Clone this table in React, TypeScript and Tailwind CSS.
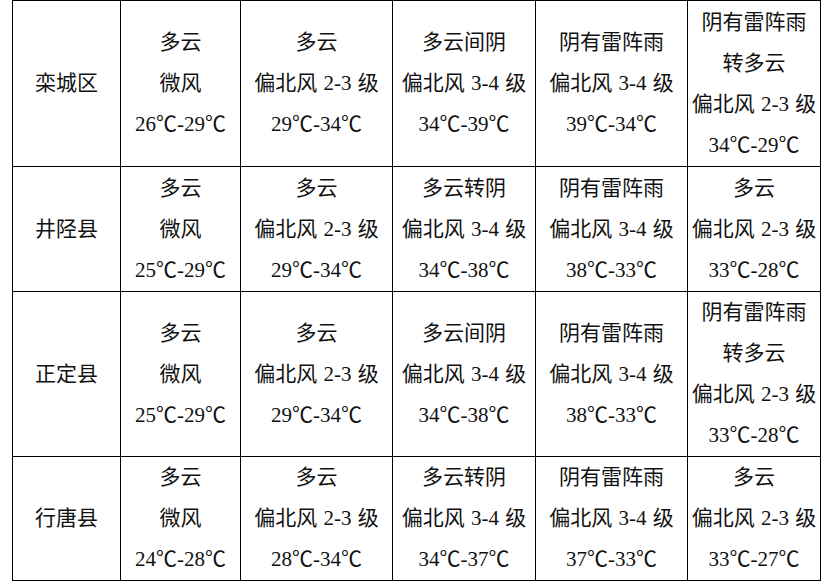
import React from 'react';

type Row = { name: string; cells: string[][] };

const rows: Row[] = [
  {
    name: '栾城区',
    cells: [
      ['多云', '微风', '26℃-29℃'],
      ['多云', '偏北风 2-3 级', '29℃-34℃'],
      ['多云间阴', '偏北风 3-4 级', '34℃-39℃'],
      ['阴有雷阵雨', '偏北风 3-4 级', '39℃-34℃'],
      ['阴有雷阵雨', '转多云', '偏北风 2-3 级', '34℃-29℃'],
    ],
  },
  {
    name: '井陉县',
    cells: [
      ['多云', '微风', '25℃-29℃'],
      ['多云', '偏北风 2-3 级', '29℃-34℃'],
      ['多云转阴', '偏北风 3-4 级', '34℃-38℃'],
      ['阴有雷阵雨', '偏北风 3-4 级', '38℃-33℃'],
      ['多云', '偏北风 2-3 级', '33℃-28℃'],
    ],
  },
  {
    name: '正定县',
    cells: [
      ['多云', '微风', '25℃-29℃'],
      ['多云', '偏北风 2-3 级', '29℃-34℃'],
      ['多云间阴', '偏北风 3-4 级', '34℃-38℃'],
      ['阴有雷阵雨', '偏北风 3-4 级', '38℃-33℃'],
      ['阴有雷阵雨', '转多云', '偏北风 2-3 级', '33℃-28℃'],
    ],
  },
  {
    name: '行唐县',
    cells: [
      ['多云', '微风', '24℃-28℃'],
      ['多云', '偏北风 2-3 级', '28℃-34℃'],
      ['多云转阴', '偏北风 3-4 级', '34℃-37℃'],
      ['阴有雷阵雨', '偏北风 3-4 级', '37℃-33℃'],
      ['多云', '偏北风 2-3 级', '33℃-27℃'],
    ],
  },
];

const rowHeights = ['h-[166px]', 'h-[125px]', 'h-[165px]', 'h-[124px]'];

// ℃ looks full-width in the original, so draw it with the CJK face
function Line({ text }: { text: string }) {
  const parts = text.split('℃');
  return (
    <div className="h-[41px]">
      {parts.map((p, k) => (
        <React.Fragment key={k}>
          {p}
          {k < parts.length - 1 && (
            <span className="leading-none" style={{ fontFamily: '"Noto Sans CJK SC", sans-serif' }}>
              ℃
            </span>
          )}
        </React.Fragment>
      ))}
    </div>
  );
}

export default function App() {
  return (
    <div
      className="w-[835px] h-[587px] bg-white pl-3 text-[21px] leading-[41px] text-[#111] [word-spacing:1px]"
      style={{ fontFamily: '"Liberation Serif", "Noto Sans CJK SC", serif' }}
    >
      <table className="table-fixed border-collapse w-[808px]">
        <colgroup>
          <col className="w-[108px]" />
          <col className="w-[120px]" />
          <col className="w-[152px]" />
          <col className="w-[143px]" />
          <col className="w-[152px]" />
          <col className="w-[133px]" />
        </colgroup>
        <tbody>
          {rows.map((row, i) => (
            <tr key={row.name} className={rowHeights[i]}>
              <td className="border border-black text-center align-middle p-0">{row.name}</td>
              {row.cells.map((lines, j) => (
                <td key={j} className="border border-black text-center align-middle p-0 whitespace-nowrap">
                  {lines.map((l) => (
                    <Line key={l} text={l} />
                  ))}
                </td>
              ))}
            </tr>
          ))}
        </tbody>
      </table>
    </div>
  );
}
